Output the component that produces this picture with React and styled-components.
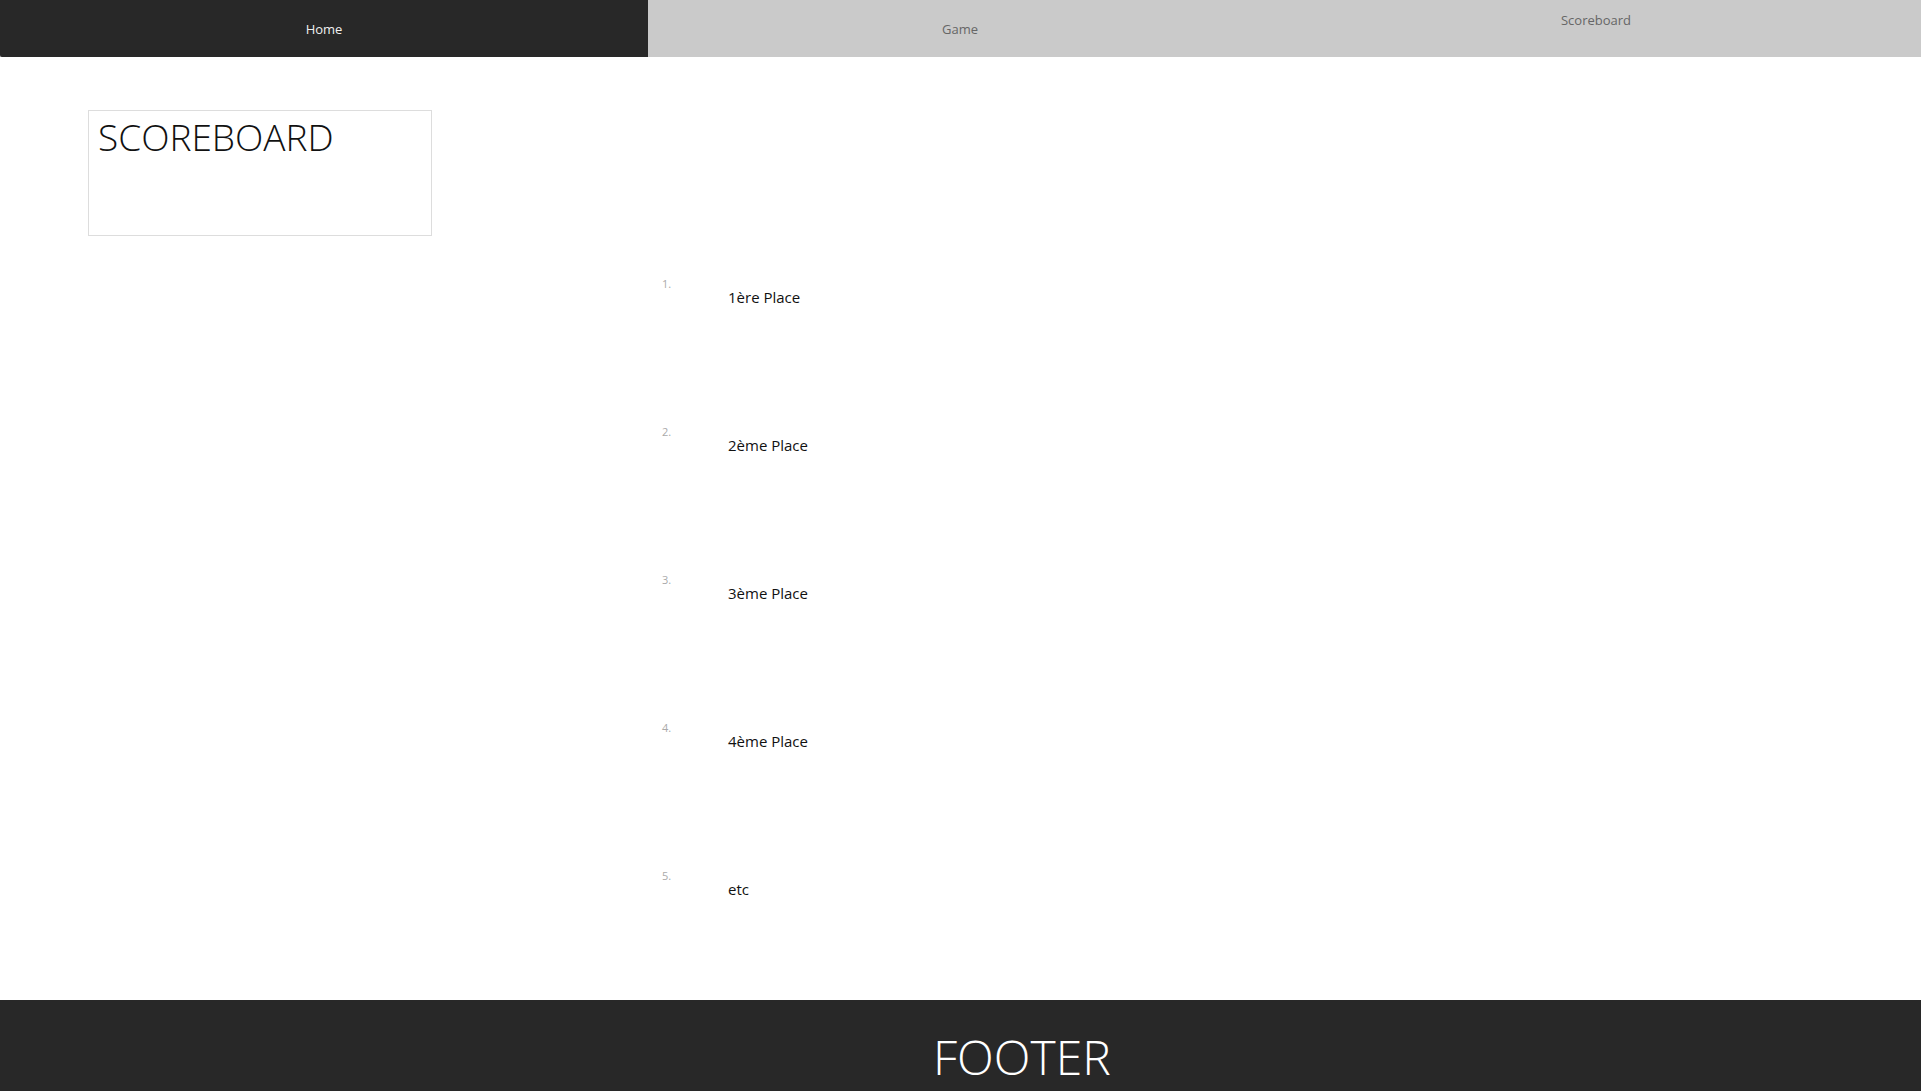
import styled, { createGlobalStyle } from "styled-components";

const GlobalStyle = createGlobalStyle`
	html, body {
		margin: 0;
		padding: 0;
		overflow: hidden;
		background: #ffffff;
		font-family: "Open Sans", "Liberation Sans", sans-serif;
	}
`;

const Nav = styled.nav`
	display: grid;
	grid-template-columns: 648px 624px 648px;
	height: 57px;
	background: #cacaca;
`;

const NavItem = styled.a`
	display: flex;
	justify-content: center;
	align-items: ${(props) => (props.top ? "flex-start" : "center")};
	padding-top: ${(props) => (props.top ? "11px" : "0")};
	font-size: 13px;
	line-height: 18px;
	text-decoration: none;
	color: ${(props) => (props.active ? "#f0f0f0" : "#666666")};
	background: ${(props) => (props.active ? "#282828" : "#cacaca")};
	border-bottom-left-radius: ${(props) => (props.active ? "2px" : "0")};
	box-sizing: border-box;
`;

const Main = styled.main`
	display: flex;
	flex-direction: column;
	align-items: flex-start;
	height: 943px;
	padding: 53px 0 0 88px;
	box-sizing: border-box;
`;

const TitleBox = styled.div`
	width: 344px;
	height: 126px;
	border: 1px solid #dddddd;
	padding: 4px 9px;
	box-sizing: border-box;
`;

const Title = styled.h1`
	margin: 0;
	font-size: 37px;
	line-height: 44px;
	font-weight: 300;
	color: #111111;
`;

const Ranking = styled.ol`
	display: flex;
	flex-direction: column;
	gap: 113px;
	list-style: none;
	margin: 40px 0 0 574px;
	padding: 0;
`;

const Row = styled.li`
	display: flex;
	height: 35px;
`;

const Num = styled.span`
	width: 66px;
	font-size: 11px;
	line-height: 15px;
	color: #aaaaaa;
`;

const Label = styled.span`
	padding-top: 11px;
	font-size: 15px;
	line-height: 20px;
	color: #111111;
`;

const Footer = styled.footer`
	height: 91px;
	background: #282828;
	padding: 28px 0 0 933px;
	box-sizing: border-box;
	overflow: hidden;
`;

const FooterText = styled.div`
	font-size: 48px;
	line-height: 57px;
	font-weight: 300;
	color: #ffffff;
`;

const places = ["1ère Place", "2ème Place", "3ème Place", "4ème Place", "etc"];

export default function App() {
	return (
		<>
			<GlobalStyle />
			<Nav>
				<NavItem href="#" active>
					Home
				</NavItem>
				<NavItem href="#">Game</NavItem>
				<NavItem href="#" top>
					Scoreboard
				</NavItem>
			</Nav>
			<Main>
				<TitleBox>
					<Title>SCOREBOARD</Title>
				</TitleBox>
				<Ranking>
					{places.map((place, i) => (
						<Row key={place}>
							<Num>{i + 1}.</Num>
							<Label>{place}</Label>
						</Row>
					))}
				</Ranking>
			</Main>
			<Footer>
				<FooterText>FOOTER</FooterText>
			</Footer>
		</>
	);
}
